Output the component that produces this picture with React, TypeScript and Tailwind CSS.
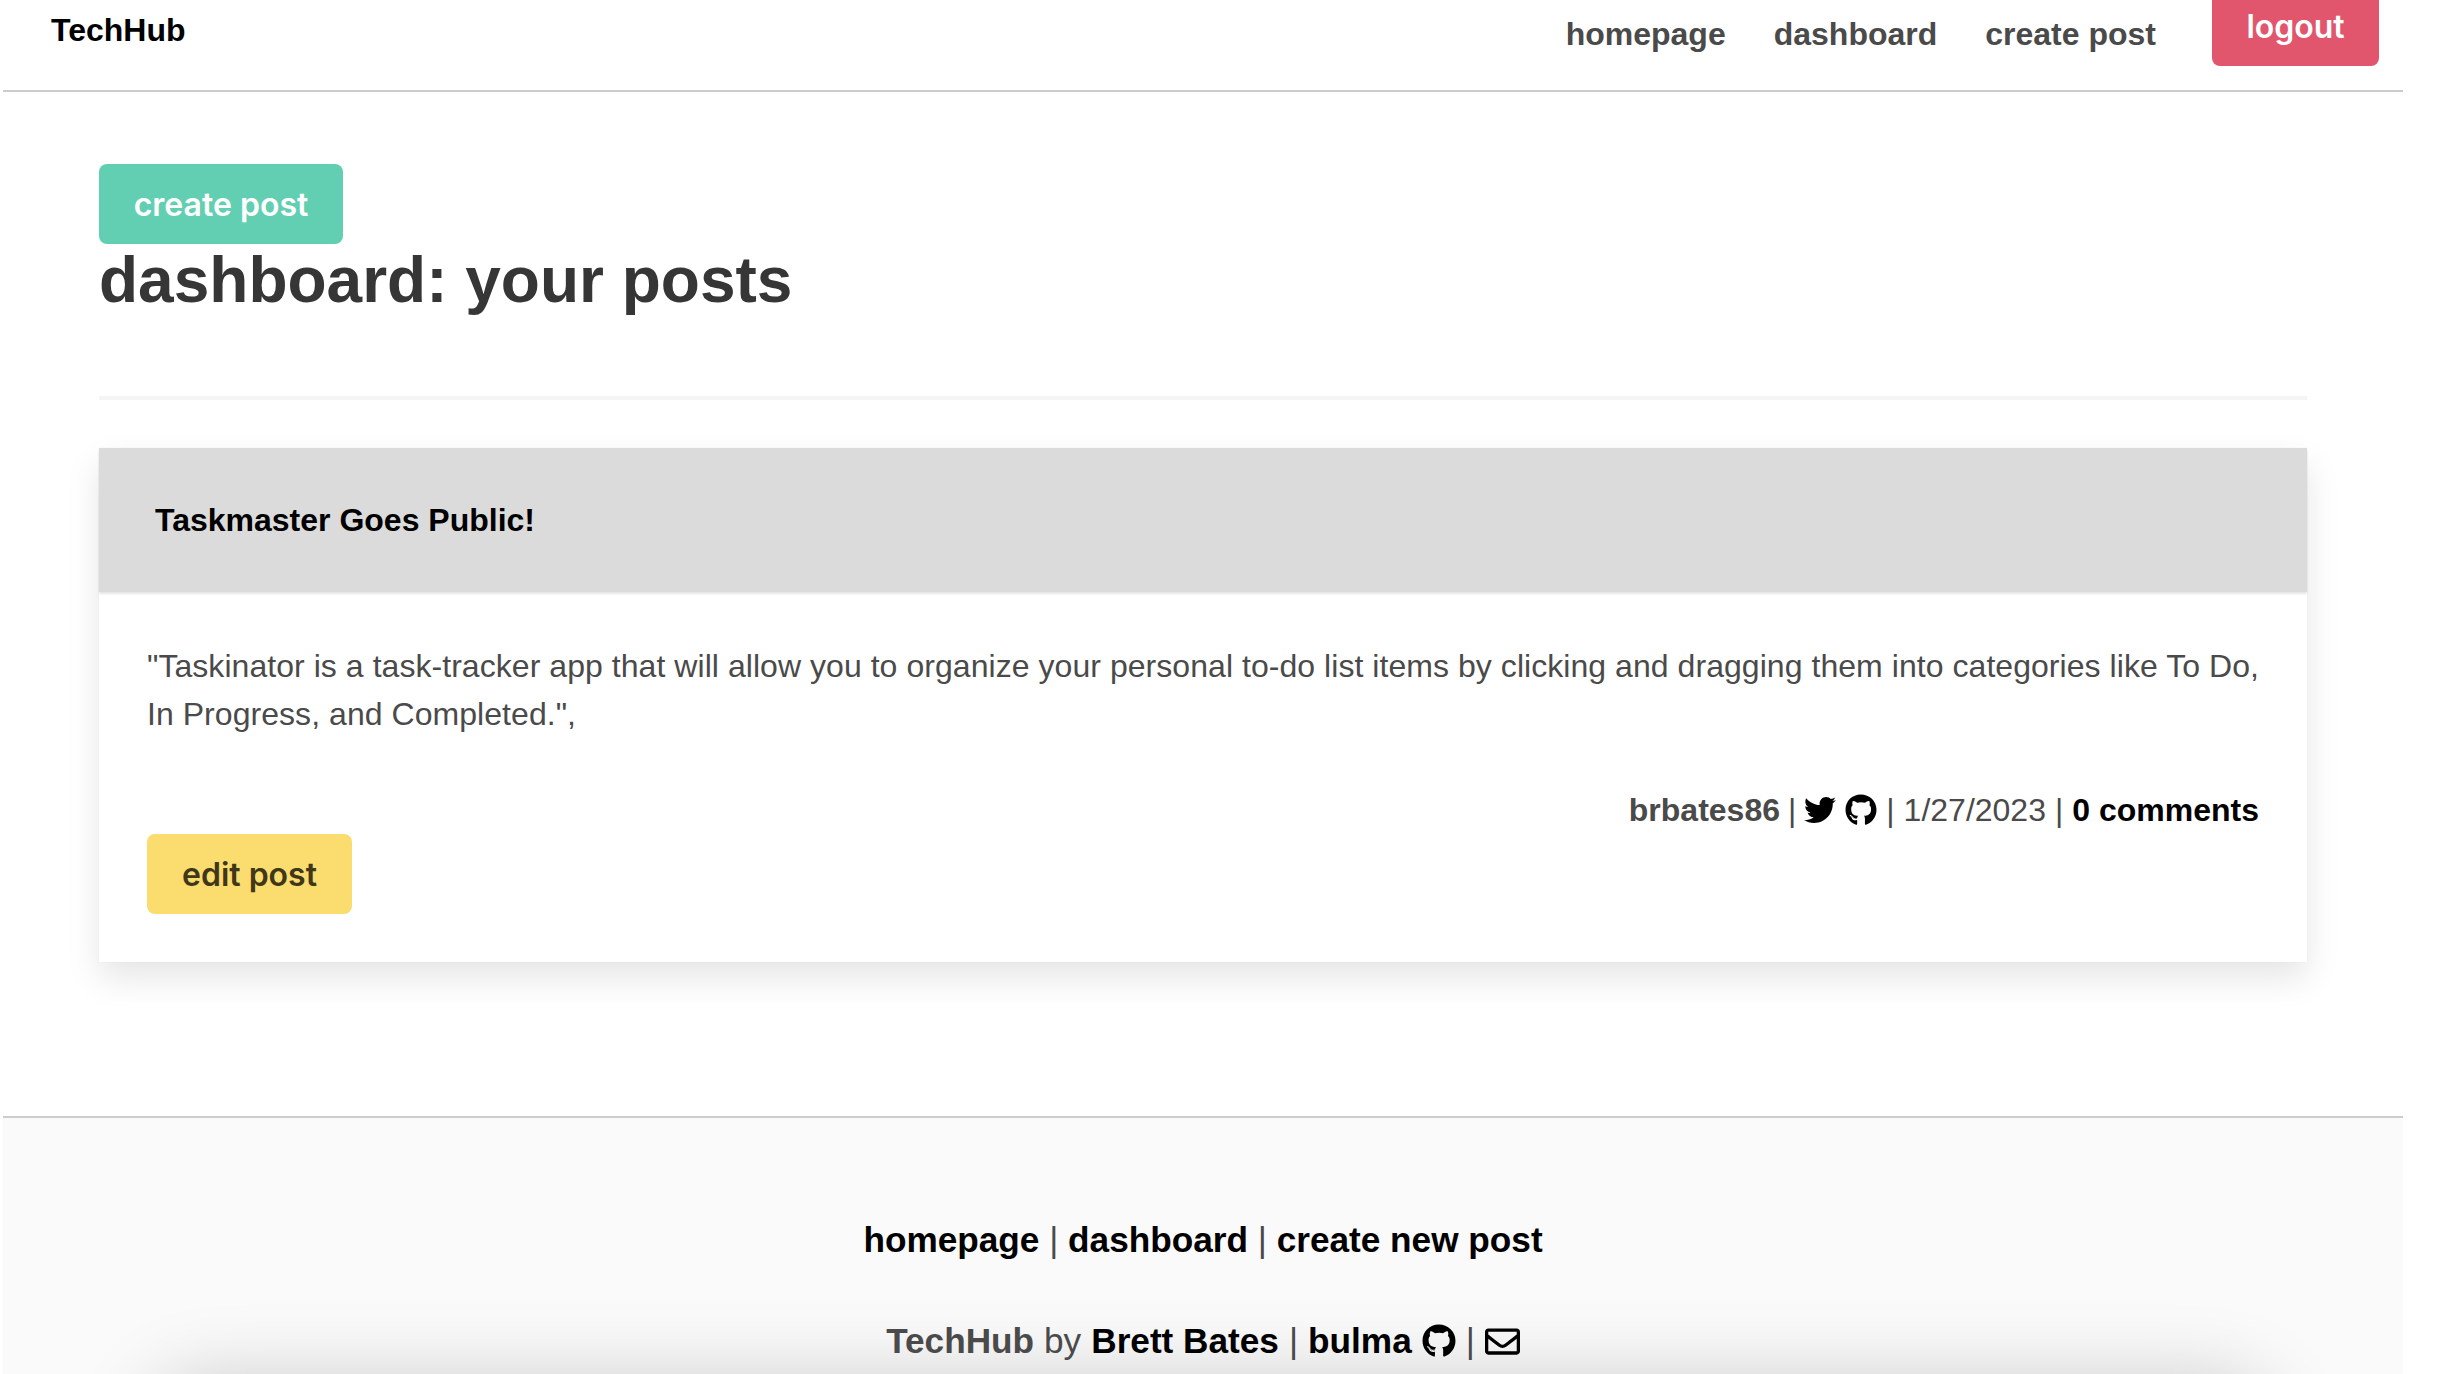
import { FaGithub, FaRegEnvelope, FaTwitter } from 'react-icons/fa';

function NavBar() {
  return (
    <nav className="flex h-[92px] items-start justify-between border-b-2 border-[#ccc] pl-[48px] pr-6">
      <a className="mt-[10px] text-[32px] leading-[40px] font-bold text-black">TechHub</a>
      <div className="flex items-start">
        <a className="mr-[48px] mt-[14px] text-[32px] leading-[40px] font-bold text-[#4a4a4a]">homepage</a>
        <a className="mr-[48px] mt-[14px] text-[32px] leading-[40px] font-bold text-[#4a4a4a]">dashboard</a>
        <a className="mr-[56px] mt-[14px] text-[32px] leading-[40px] font-bold text-[#4a4a4a]">create post</a>
        <button className="-mt-[14px] flex h-[80px] w-[167px] items-center justify-center rounded-b-lg bg-[#e1556d] pt-[2px] font-['Inter',sans-serif] text-[32px] font-semibold text-white">
          logout
        </button>
      </div>
    </nav>
  );
}

function PostCard() {
  return (
    <article className="mt-12 shadow-[0_16px_32px_rgba(10,10,10,0.1),0_0_2px_rgba(10,10,10,0.04)]">
      <header className="flex h-[144px] items-center bg-[#dbdbdb] pl-[56px] shadow-[0_2px_2px_rgba(10,10,10,0.1)]">
        <h2 className="text-[32px] font-bold text-black">Taskmaster Goes Public!</h2>
      </header>
      <div className="px-12 pt-[50px] pb-[48px]">
        <p className="whitespace-nowrap text-[32px] leading-[48px] tracking-[0.05px] text-[#4a4a4a]">
          "Taskinator is a task-tracker app that will allow you to organize your personal to-do list items by clicking
          and dragging them into categories like To Do,
          <br />
          In Progress, and Completed.",
        </p>
        <div className="mt-[48px] flex items-center justify-end text-[32px] leading-[48px] text-[#4a4a4a]">
          <b>brbates86</b>
          <span className="mx-[8px]">|</span>
          <FaTwitter className="text-[32px] text-black" />
          <FaGithub className="ml-[9px] text-[32px] text-black" />
          <span className="mx-[9px]">|</span>
          <span>1/27/2023</span>
          <span className="mx-[9px]">|</span>
          <b className="text-black">0 comments</b>
        </div>
        <button className="block h-[80px] w-[205px] rounded-lg bg-[#fbdc6e] pt-[2px] font-['Inter',sans-serif] text-[32px] font-semibold text-[#40371a]">
          edit post
        </button>
      </div>
    </article>
  );
}

function Footer() {
  return (
    <footer className="mt-[154px] h-[300px] border-t-2 border-[#ccc] bg-[#fafafa] pt-[98px] text-center text-[35.2px] leading-[48px] text-[#4a4a4a]">
      <div className="relative z-10">
        <p>
          <b className="text-black">homepage</b> | <b className="text-black">dashboard</b> |{' '}
          <b className="text-black">create new post</b>
        </p>
        <p className="mt-[53px] flex items-center justify-center">
          <b>TechHub</b>
          <span className="ml-[10px]">by</span>
          <b className="ml-[10px] text-black">Brett Bates</b>
          <span className="mx-[10px]">|</span>
          <b className="text-black">bulma</b>
          <FaGithub className="ml-[10px] text-[34px] text-black" />
          <span className="mx-[10px]">|</span>
          <FaRegEnvelope className="text-[35px] text-black" />
        </p>
      </div>
    </footer>
  );
}

export default function App() {
  return (
    <div className="relative h-screen overflow-hidden bg-white font-['Liberation_Sans',sans-serif]">
      <div className="ml-[3px] w-[2400px]">
        <NavBar />
        <main className="mx-[96px] pt-[72px]">
          <button className="flex h-[80px] w-[244px] items-center justify-center rounded-lg bg-[#62cfb3] pt-[2px] font-['Inter',sans-serif] text-[32px] font-semibold text-white">
            create post
          </button>
          <h1 className="text-[64px] leading-[72px] font-bold text-[#363636]">dashboard: your posts</h1>
          <hr className="mt-[80px] h-1 border-0 bg-[#f5f5f5]" />
          <PostCard />
        </main>
        <Footer />
      </div>
      {/* soft shadow rising from below the fold */}
      <div className="pointer-events-none absolute top-[1412px] left-[180px] h-[40px] w-[2060px] rounded-[30px] shadow-[0_0_80px_30px_rgba(0,0,0,0.2)]" />
    </div>
  );
}
